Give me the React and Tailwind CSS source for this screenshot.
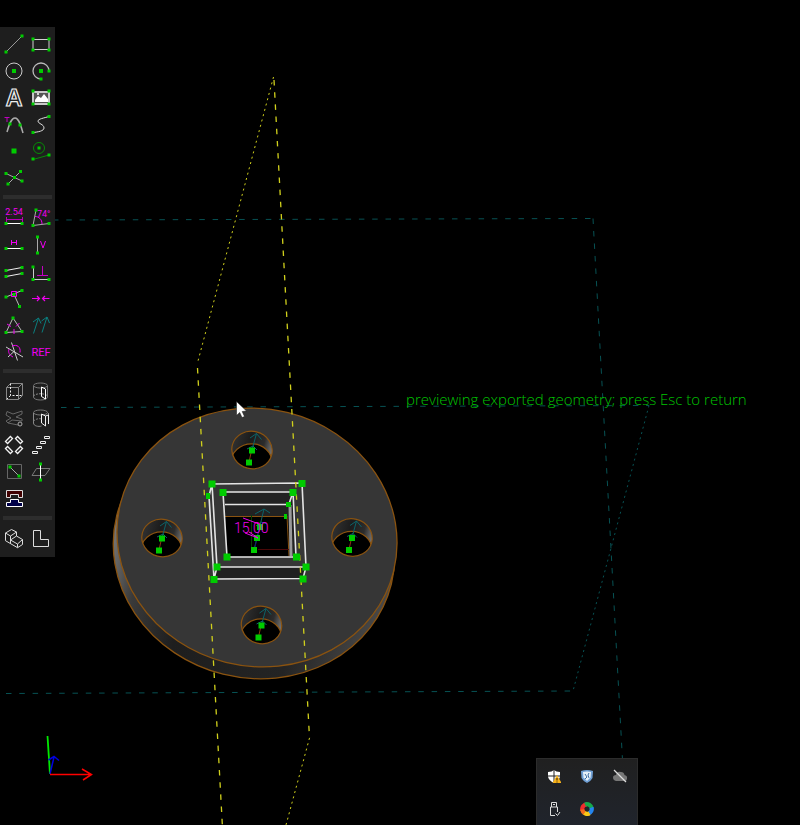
const G = '#00cc00';
const M = '#f000f0';
const T = '#0b7f7f';

function Dots({ at, size = 3 }) {
  return at.map(([x, y]) => (
    <rect key={`${x}-${y}`} x={x - size / 2} y={y - size / 2} width={size} height={size} fill={G} stroke="none" />
  ));
}

function Label({ x, y, size, children, anchor = 'start' }) {
  return (
    <text x={x} y={y} fontSize={size} textAnchor={anchor} fill={M} stroke="none" fontFamily="Roboto, 'Liberation Sans', sans-serif">
      {children}
    </text>
  );
}

const sketchTools = [
  ['Line', <><path d="M6 22 22 6" stroke="#999" /><Dots at={[[6, 22], [22, 6]]} /></>],
  ['Rectangle', <><path d="M6 9.5h16v10H6z" stroke="#d0d0d0" /><Dots at={[[6, 9], [22, 9], [6, 20], [22, 20]]} /></>],
  ['Circle', <><circle cx="14" cy="14" r="8" stroke="#ccc" /><Dots at={[[14, 14]]} size={4} /></>],
  ['Arc', <><path d="M22 14A8 8 0 1 0 14 22" stroke="#bbb" strokeWidth="1.3" /><Dots at={[[14, 14]]} size={4} /><Dots at={[[22, 14], [14, 22]]} /></>],
  ['Text', <text x="14" y="22" fontSize="23" fontWeight="700" textAnchor="middle" stroke="#eee" strokeWidth="1.2" fill="none" fontFamily="'Liberation Sans', sans-serif">A</text>],
  ['Image', <><path d="M6 8h16v12H6z" fill="#555" stroke="#c8c8c8" strokeWidth="2" /><path d="M8 18v-2l3-4 3 2 3-4 4 5v3z" fill="#fff" stroke="none" /><circle cx="11" cy="10" r="1" fill="#fff" stroke="none" /><Dots at={[[6, 7], [22, 7], [6, 20], [22, 20]]} /></>],
  ['Tangent arc', <><path d="M7 21C9 14 11 7 15 7S21 15 23 22" stroke="#aaa" strokeWidth="1.5" /><Dots at={[[10, 13], [20, 14]]} /><path d="M4.5 6.5h5M7 6v5" stroke="#c000c0" /></>],
  ['Spline', <><path d="M22 5.5C17 7 11 8 11 10c0 3 6 3 6 7 0 3-6 4-11 4.5" stroke="#ddd" /><Dots at={[[22, 5.5], [6, 21.5]]} /></>],
  ['Point', <Dots at={[[14, 13]]} size={5} />],
  ['Construction', <><circle cx="12" cy="10" r="5.5" stroke="#078a07" /><path d="M6 21.5 22 17" stroke="#078a07" /><Dots at={[[12, 10], [6, 21], [22, 17]]} /></>],
  ['Split', <><path d="m6 8.5 16 7.5M20.5 6.5 8 19" stroke="#aaa" /><Dots at={[[6, 8.5], [22, 16], [20.5, 6.5], [8, 19], [14.5, 12.5]]} /></>],
];

const constraintTools = [
  ['Distance', <><Label x={14} y={11} size={9} anchor="middle">2.54</Label><path d="M6.5 15.5h16M6.5 13v5M22.5 13v5" stroke="#b800b8" /><path d="M6 19.5h16" stroke="#fff" /><Dots at={[[6, 19.5], [22, 19.5]]} /></>],
  ['Angle', <><path d="M9 6 6 21.5 22 19.5" stroke="#aaa" /><path d="M8 12.5c4 0 7 3 7 7.5" stroke={M} /><Label x={10} y={13} size={9}>74°</Label><Dots at={[[9, 6], [6, 21.5], [22, 19.5]]} /></>],
  ['Horizontal', <><path d="M11.5 9v5M16.5 9v5M11.5 11.5h5" stroke={M} /><path d="M6 17.5h16" stroke="#fff" /><Dots at={[[6, 17.5], [22, 17.5]]} /></>],
  ['Vertical', <><path d="m13.5 10 2.5 7 2.5-7" stroke={M} /><path d="M10.5 6v16" stroke="#aaa" /><Dots at={[[10.5, 6], [10.5, 22]]} /></>],
  ['Parallel', <><path d="m6 12.5 16-3M6 18.5l16-3" stroke="#eee" /><Dots at={[[6, 12.5], [22, 9.5], [6, 18.5], [22, 15.5]]} /></>],
  ['Perpendicular', <><path d="M6.5 9v12.5H22" stroke="#ccc" /><path d="M15.5 8v9.5M10 17.5h11" stroke="#c400c4" /><Dots at={[[6, 9], [6, 21.5], [22, 21.5]]} /></>],
  ['Point on line', <><path d="m6 12 16-6.5M14 9.5l5.5 12" stroke="#bbb" /><path d="M11.5 6.5h5v5h-5z" stroke={M} /><Dots at={[[6, 12], [22, 5.5], [14, 9.5], [19.5, 21.5]]} /></>],
  ['Symmetric', <path d="M5 13.5h7M10 11l2.5 2.5L10 16M22.5 13.500h-7M18 11l-2.5 2.5L18 16" stroke={M} strokeWidth="1.2" />],
  ['Equal', <><path d="M13 6 6 20.5l16-1z" stroke="#bbb" /><path d="m7 12 4 2.5M19.500 11 16 14.500M14 17v5" stroke={M} /><Dots at={[[13, 6], [6, 20.5], [22, 19.5]]} /></>],
  ['Same orientation', <path d="M6.500 21.500 11.500 6M6 10l5.500-4 2.500 5.500M15 20.500l5-15.500M14.500 9 20 5l2.500 6" stroke={T} />],
  ['Other angle', <><path d="m6 8 17 10M11.500 3.500l6 18M14 12.500 8 18" stroke="#ccc" /><path d="M12 7c5-2 9 1 8 6.500M9 10c-1 3 0 6 4 8" stroke={M} /></>],
  ['Reference', <Label x={14} y={17} size={11} anchor="middle">REF</Label>],
];

const groupTools = [
  ['Extrude', <><path d="M6.500 9.500h12v12h-12zM6.500 9.500l4-4h12v12l-4 4M18.500 9.500l4-4" stroke="#888" /><path d="M10.500 5.500v12h12M10.500 17.500l-4 4" stroke="#eee" strokeDasharray="2 1.500" /></>],
  ['Lathe', <><ellipse cx="13.500" cy="7.500" rx="7" ry="2.500" stroke="#777" /><path d="M6.500 8v11c0 4 14 4 14 0V8" stroke="#777" /><path d="M6.500 18c2-3 12-3 14 0" stroke="#888" strokeDasharray="2 1" /><path d="m14.500 9 4 2v10l-4-2.500z" stroke="#fff" /></>],
  ['Sweep', <><path d="M7 6.500 13 9l9-3v3l-6 3 6 2v2l-10-1-4 3-2-2 5-3-5-3zM8 18l10 2" stroke="#666" /><circle cx="20" cy="19" r="2" stroke="#aaa" /></>],
  ['Revolve', <><ellipse cx="13.500" cy="7.500" rx="7" ry="2.500" stroke="#777" /><path d="M6.500 8v10c0 3 5 4 8 3M21.500 8v11" stroke="#888" /><path d="M6.500 16c2-2 6-3 8-2" stroke="#777" strokeDasharray="2 1" /><path d="m14.500 9 4 2v10l-4-3zM18.500 11l3-1v9" stroke="#eee" /></>],
  ['Step rotating', <>{[[9, 8, -45], [19, 8, 45], [9, 18, 45], [19, 18, -45]].map(([x, y, r]) => <rect key={`${x}${y}`} x={x - 3.5} y={y - 1.5} width="7" height="3" transform={`rotate(${r} ${x} ${y})`} stroke="#f2f2f2" strokeWidth="1.300" />)}</>],
  ['Step translating', <path d="M17.500 4.500h5v2h-5zM13.500 9.500h5v2h-5zM9.500 14.500h5v2h-5zM5.500 19.500h5v2h-5z" stroke="#eee" />],
  ['Sketch in plane', <><path d="M7.500 5.500h14v14h-14z" stroke="#666" /><path d="m10 8 9 9" stroke="#aaa" /><Dots at={[[10, 8], [19, 17]]} /></>],
  ['Sketch in new plane', <><path d="M9.500 9.500H23l-5 7H5z" stroke="#777" /><path d="M13.500 5v16" stroke="#fff" /><Dots at={[[13.5, 5], [13.5, 21]]} /></>],
  ['Assemble', <><path d="M6.500 4.500h16v7h-4v-3h-8v3h-4z" fill="#400000" stroke="#ddd" /><path d="M10.500 13.500h8v3h4v4h-16v-4h4z" fill="#000048" stroke="#fff" /></>],
];

const viewTools = [
  ['Nearest isometric view', <path d="m5.500 8 6-3.500 5 2.500v4l6 3.500v5l-5 3.200-12-7zM5.500 8l5 3 6-4M10.500 11v4l7 4 5-4.500M10.500 15l6-4M17.500 19v3.500M10.500 15v3.500" stroke="#ddd" />],
  ['Nearest orthographic view', <path d="M6.500 5.500h7v9h8v7h-15z" stroke="#ddd" />],
];

function ToolGroup({ label, tools }) {
  return (
    <div role="group" aria-label={label} className="grid w-[54px] grid-cols-2">
      {tools.map(([name, art]) => (
        <button key={name} type="button" aria-label={name} className="h-[27px] w-[27px] hover:bg-[#333]">
          <svg viewBox="0 0 27 27" fill="none" strokeWidth="1" className="h-full w-full">{art}</svg>
        </button>
      ))}
    </div>
  );
}

function Divider() {
  return <div className="mx-[3px] mt-[3px] mb-[5px] h-1 bg-[#2d2d2d]" />;
}

function Toolbar() {
  return (
    <aside className="relative mt-[27px] w-[55px] bg-[#1e1e1e] pt-[3px] pb-[5px]">
      <ToolGroup label="Sketch" tools={sketchTools} />
      <Divider />
      <ToolGroup label="Constraints" tools={constraintTools} />
      <Divider />
      <ToolGroup label="Groups" tools={groupTools} />
      <Divider />
      <ToolGroup label="View" tools={viewTools} />
    </aside>
  );
}

function Hole({ id, x, y }) {
  return (
    <g transform={`translate(${x} ${y})`}>
      <clipPath id={id}><ellipse rx="20.300" ry="18.700" transform="rotate(14)" /></clipPath>
      <ellipse rx="20.300" ry="18.700" transform="rotate(14)" fill="url(#wall)" />
      <g clipPath={`url(#${id})`}>
        <ellipse cx="-0.500" cy="12.500" rx="20.500" ry="18.700" fill="#000" stroke="#8a5310" strokeWidth="1.200" />
      </g>
      <ellipse rx="20.300" ry="18.700" transform="rotate(14)" fill="none" stroke="#8a5310" strokeWidth="1.200" />
      <path d="M-1 3-3 12" stroke="#8c3a12" />
      <path d="M0 0 4.500-16.500M-2-12l6.500-4.500 5 6M-5-1 1-4l4 4" stroke="#0c6468" fill="none" />
      <Dots at={[[0, 0.5], [-3, 12.5]]} size={6} />
    </g>
  );
}

const vertices = [
  [212, 484], [302, 483.5], [223, 492.5], [293, 492.5], [227, 557], [296.5, 557], [217, 567],
  [306, 567], [214, 579.5], [303, 579],
];

function Model() {
  return (
    <svg aria-label="Flange model" className="absolute inset-0 h-full w-full" fill="none">
      <defs>
        <linearGradient id="rim" gradientUnits="userSpaceOnUse" x1="113" y1="0" x2="397" y2="0">
          <stop offset="0" stopColor="#777" /><stop offset="0.120" stopColor="#3a3a3a" /><stop offset="0.300" stopColor="#1e1e1e" />
          <stop offset="0.700" stopColor="#242424" /><stop offset="1" stopColor="#4a4a4a" />
        </linearGradient>
        <linearGradient id="wall">
          <stop offset="0" stopColor="#303030" /><stop offset="0.400" stopColor="#1c1c1c" /><stop offset="0.750" stopColor="#2c2c2c" /><stop offset="1" stopColor="#777" />
        </linearGradient>
      </defs>

      <g stroke="#075254">
        <path d="M53 220 592 218.500M61 407.500l588-2M6 693.500l567-2.500" strokeDasharray="5.500 7.800" />
        <path d="M593 218.500 622.500 760" strokeDasharray="5.500 7" />
        <path d="M649 405.500 573 691" strokeDasharray="2 3.500" />
      </g>

      <g stroke="#8a5310" strokeWidth="1.300">
        <ellipse cx="254" cy="550" rx="141.500" ry="128" transform="rotate(14 254 550)" fill="url(#rim)" />
        <ellipse cx="257" cy="537.500" rx="140.700" ry="128.700" transform="rotate(14 257 537.500)" fill="#363636" />
      </g>
      <Hole id="hole-top" x={252} y={450} />
      <Hole id="hole-left" x={162} y={538} />
      <Hole id="hole-right" x={352} y={537.5} />
      <Hole id="hole-bottom" x={261.5} y={625} />

      <path d="M223 492h70l3 65h-69z" fill="#222" />
      <path d="M225 516.500h63l2 40h-63z" fill="#000" />
      <path d="m217 567 89 0-3 12h-89z" fill="#202020" />
      <path d="M225 516.500h61M287 516l2 40" stroke="#8a5310" />
      <path d="M258 549.500h31" stroke="#4a0808" />
      <g stroke="#e4e4e4" strokeWidth="1.600">
        <path d="m212 484 90-1M212 484l5 83h89l-4-84M209 496l5 83 89-.5 3-11.500M217 567l-3 12M212 484l-3 12" />
        <path d="M223 492h70l3 65h-69zM225 504.500h64M289 504l4-12" />
      </g>
      <path d="m290 505 1 51" stroke="#999" strokeWidth="3" />

      <g stroke="#d0d01c">
        <path d="M273.500 77 198 361M309.500 738 286 825" strokeDasharray="2 3.500" />
        <path d="M197.500 368 222.500 828M274 80l35.500 658" strokeWidth="1.300" strokeDasharray="5.500 6.700" />
      </g>
      <path d="M251.500 515v33" stroke="#063f06" />
      <path d="m254 550 10-41M255 514l9-5 6 4M256 526l5-4 6 2" stroke="#0c6468" />
      <path d="m255 547 4-17" stroke="#14146e" />
      <Dots at={[[260, 527], [257, 538], [254, 550]]} size={6} />
      <path d="m243 518 16 6M249 532l9 6M245 533l13 5" stroke={M} />
      <text x="234" y="533" fontSize="14" fontWeight="300" fill={M} fontFamily="Roboto, 'Liberation Sans', sans-serif">15.00</text>
      <Dots at={vertices} size={7} />
      <Dots at={[[288.5, 504.5]]} size={5} />
      <path d="M206 493h4v6h-4zM284 514h3v5h-3z" fill={G} />

      <path d="m50 774-2.500-38" stroke="#00e800" strokeWidth="1.800" />
      <path d="m50 774 4-17M48.500 760l5.500-3.500 5 4" stroke="#0000e0" strokeWidth="1.500" />
      <path d="M50 774.500h41M82 769l9.500 5.500L83 780" stroke="#f00" strokeWidth="1.500" />
      <path d="M236.500 401.500v14l3.200-3 2.300 5 2.500-1-2.300-5 4.300-.5z" fill="#fff" stroke="#111" strokeWidth="0.500" />
    </svg>
  );
}

const trayItems = [
  ['Security warning', <>
    <path d="M1 3q4 0 6-2 2 2 6 2v4q0 4-6 7Q1 11 1 7z" fill="#fff" /><path d="M7 1v13M1 7h12" stroke="#222" />
    <path d="m10 6 4.500 8h-9z" fill="#f7b21b" /><path d="M10 9v2.500M10 12.500v1" stroke="#2a1800" />
  </>],
  ['Virtual machine', <>
    <path d="M1 2q6-2 12 0l-.500 7Q11 12 7 14 3 12 1.500 9z" fill="#6f9fd4" /><path d="M3 3q4-1 8 0l-.5 5.500L7 12 3.500 8.500z" fill="#e6f0f8" /><path d="m5 5 2 3-2 2M9 4 8 6l1 3" stroke="#3b6da5" />
  </>],
  ['Cloud offline', <>
    <path d="M3 12Q0 11 0 8.500T3 6q1-4 5-3 3 0 3.500 3Q15 7 14 10q-.5 2-2 2z" fill="#777" /><path d="m1 1 12 12" stroke="#ddd" strokeWidth="1.300" />
  </>],
  ['Eject device', <>
    <path d="M4.500 5V.5h5V5M3.500 5h7v5M3.500 5v8.500H8M6 2.500h2M8.500 11.500l2 2L13 10" stroke="#ddd" />
  </>],
  ['Colour wheel', <g strokeWidth="4.200">
    <path d="M2.500 8.500A4.700 4.700 0 0 1 7 2.300" stroke="#ef2b2d" /><path d="M5 2.700A4.700 4.700 0 0 1 11.700 6.500" stroke="#15a84c" />
    <path d="M11.500 5.500A4.700 4.700 0 0 1 8.500 11.500" stroke="#2485ef" /><path d="M9.500 11.200A4.700 4.700 0 0 1 4 10.700" stroke="#f9c816" /><path d="M4.500 11A4.700 4.700 0 0 1 2.300 7.500" stroke="#f36b1c" />
  </g>],
];

function Tray() {
  return (
    <div aria-label="Hidden icons" className="absolute right-[162px] bottom-0 grid w-[102px] grid-cols-3 border border-b-0 border-[#2c2c2c] bg-gradient-to-b from-[#202020] to-[#20242c]">
      {trayItems.map(([name, art]) => (
        <button key={name} type="button" aria-label={name} className="flex h-[33px] items-center justify-center">
          <svg viewBox="0 0 14 14" fill="none" className="size-3.5">{art}</svg>
        </button>
      ))}
    </div>
  );
}

export default function App() {
  return (
    <main className="relative min-h-screen overflow-hidden bg-black">
      <Model />
      <div className="flex items-start">
        <Toolbar />
      </div>
      <p className="absolute top-[389px] left-[406px] font-['Open_Sans',sans-serif] text-[15px] leading-5 font-light whitespace-nowrap text-[#00c400]">
        previewing exported geometry; press Esc to return
      </p>
      <Tray />
    </main>
  );
}
